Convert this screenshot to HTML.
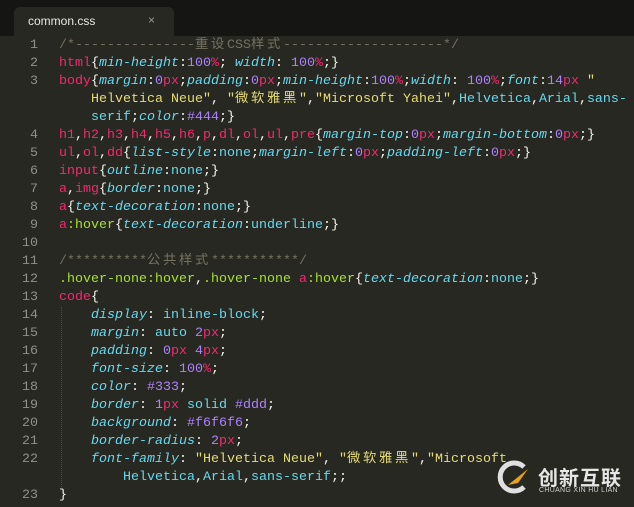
<!DOCTYPE html>
<html><head><meta charset="utf-8"><style>
body{margin:0;width:634px;height:507px;background:#272822;overflow:hidden;position:relative;font-family:"Liberation Mono","Noto Sans CJK SC",monospace;}
.tabbar{position:absolute;left:0;top:0;width:634px;height:36px;background:#151513;}
.tab{position:absolute;left:14px;top:7px;width:160px;height:29px;background:#272822;border-radius:6px 6px 0 0;}
.tab span{position:absolute;left:14px;top:7px;font:12px "Liberation Sans",sans-serif;color:#e8e8e0;}
.tab b{position:absolute;left:134px;top:6px;font:12px "Liberation Sans",sans-serif;color:#9a9a94;font-weight:normal;}
.ln{position:absolute;left:0;width:38px;text-align:right;font-size:13.33px;line-height:18px;color:#8f908a;}
.cd{position:absolute;left:59px;font-size:13.33px;line-height:18px;color:#f8f8f2;white-space:pre;}
.guide{position:absolute;left:61px;top:307px;width:0;height:180px;border-left:1px dotted #4a4a44;}
.k{letter-spacing:2.67px}
.c{color:#75715e}.t{color:#f92672}.p{color:#66d9ef;font-style:italic}.v{color:#66d9ef}.n{color:#ae81ff}.u{color:#f92672}.s{color:#e6db74}.g{color:#a6e22e}
</style></head><body>
<div class="tabbar"><div class="tab"><span>common.css</span><b>×</b></div></div>
<div class="guide"></div>
<div class="ln" style="top:37px">1</div>
<div class="ln" style="top:55px">2</div>
<div class="ln" style="top:73px">3</div>
<div class="ln" style="top:127px">4</div>
<div class="ln" style="top:145px">5</div>
<div class="ln" style="top:163px">6</div>
<div class="ln" style="top:181px">7</div>
<div class="ln" style="top:199px">8</div>
<div class="ln" style="top:217px">9</div>
<div class="ln" style="top:235px">10</div>
<div class="ln" style="top:253px">11</div>
<div class="ln" style="top:271px">12</div>
<div class="ln" style="top:289px">13</div>
<div class="ln" style="top:307px">14</div>
<div class="ln" style="top:325px">15</div>
<div class="ln" style="top:343px">16</div>
<div class="ln" style="top:361px">17</div>
<div class="ln" style="top:379px">18</div>
<div class="ln" style="top:397px">19</div>
<div class="ln" style="top:415px">20</div>
<div class="ln" style="top:433px">21</div>
<div class="ln" style="top:451px">22</div>
<div class="ln" style="top:487px">23</div>
<div class="cd" style="top:37px"><span class="c">/*---------------<span class="k">重设</span>CSS<span class="k">样式</span>--------------------*/</span>
<span class="t">html</span>{<span class="p">min-height</span>:<span class="n">100</span><span class="u">%</span>; <span class="p">width</span>: <span class="n">100</span><span class="u">%</span>;}
<span class="t">body</span>{<span class="p">margin</span>:<span class="n">0</span><span class="u">px</span>;<span class="p">padding</span>:<span class="n">0</span><span class="u">px</span>;<span class="p">min-height</span>:<span class="n">100</span><span class="u">%</span>;<span class="p">width</span>: <span class="n">100</span><span class="u">%</span>;<span class="p">font</span>:<span class="n">14</span><span class="u">px</span> <span class="s">"</span>
<span class="s">    Helvetica Neue"</span>, <span class="s">"<span class="k">微软雅黑</span>"</span>,<span class="s">"Microsoft Yahei"</span>,<span class="v">Helvetica</span>,<span class="v">Arial</span>,<span class="v">sans-</span>
<span class="v">    serif</span>;<span class="p">color</span>:<span class="n">#444</span>;}
<span class="t">h1</span>,<span class="t">h2</span>,<span class="t">h3</span>,<span class="t">h4</span>,<span class="t">h5</span>,<span class="t">h6</span>,<span class="t">p</span>,<span class="t">dl</span>,<span class="t">ol</span>,<span class="t">ul</span>,<span class="t">pre</span>{<span class="p">margin-top</span>:<span class="n">0</span><span class="u">px</span>;<span class="p">margin-bottom</span>:<span class="n">0</span><span class="u">px</span>;}
<span class="t">ul</span>,<span class="t">ol</span>,<span class="t">dd</span>{<span class="p">list-style</span>:<span class="v">none</span>;<span class="p">margin-left</span>:<span class="n">0</span><span class="u">px</span>;<span class="p">padding-left</span>:<span class="n">0</span><span class="u">px</span>;}
<span class="t">input</span>{<span class="p">outline</span>:<span class="v">none</span>;}
<span class="t">a</span>,<span class="t">img</span>{<span class="p">border</span>:<span class="v">none</span>;}
<span class="t">a</span>{<span class="p">text-decoration</span>:<span class="v">none</span>;}
<span class="t">a</span><span class="g">:hover</span>{<span class="p">text-decoration</span>:<span class="v">underline</span>;}

<span class="c">/**********<span class="k">公共样式</span>***********/</span>
<span class="g">.hover-none:hover</span>,<span class="g">.hover-none </span><span class="t">a</span><span class="g">:hover</span>{<span class="p">text-decoration</span>:<span class="v">none</span>;}
<span class="t">code</span>{
    <span class="p">display</span>: <span class="v">inline-block</span>;
    <span class="p">margin</span>: <span class="v">auto</span> <span class="n">2</span><span class="u">px</span>;
    <span class="p">padding</span>: <span class="n">0</span><span class="u">px</span> <span class="n">4</span><span class="u">px</span>;
    <span class="p">font-size</span>: <span class="n">100</span><span class="u">%</span>;
    <span class="p">color</span>: <span class="n">#333</span>;
    <span class="p">border</span>: <span class="n">1</span><span class="u">px</span> <span class="v">solid</span> <span class="n">#ddd</span>;
    <span class="p">background</span>: <span class="n">#f6f6f6</span>;
    <span class="p">border-radius</span>: <span class="n">2</span><span class="u">px</span>;
    <span class="p">font-family</span>: <span class="s">"Helvetica Neue"</span>, <span class="s">"<span class="k">微软雅黑</span>"</span>,<span class="s">"Microsoft</span>
<span class="v">        Helvetica</span>,<span class="v">Arial</span>,<span class="v">sans-serif</span>;;
}</div>
<svg style="position:absolute;left:496px;top:459px" width="36" height="36" viewBox="0 0 36 36">
<path d="M28 8 A14 14 0 1 0 28 28" fill="none" stroke="#e0e0e0" stroke-width="5"/>
<path d="M12 26 L32 10 L22 24 Z" fill="#e8a21a"/>
</svg>
<div style="position:absolute;left:538px;top:462px;font:bold 20px 'Noto Sans CJK SC',sans-serif;color:#e6e6e6;letter-spacing:1px">创新互联</div>
<div style="position:absolute;left:539px;top:487px;font:7px 'Liberation Sans',sans-serif;color:#cfcfcf;letter-spacing:0.3px">CHUANG XIN HU LIAN</div>
</body></html>
